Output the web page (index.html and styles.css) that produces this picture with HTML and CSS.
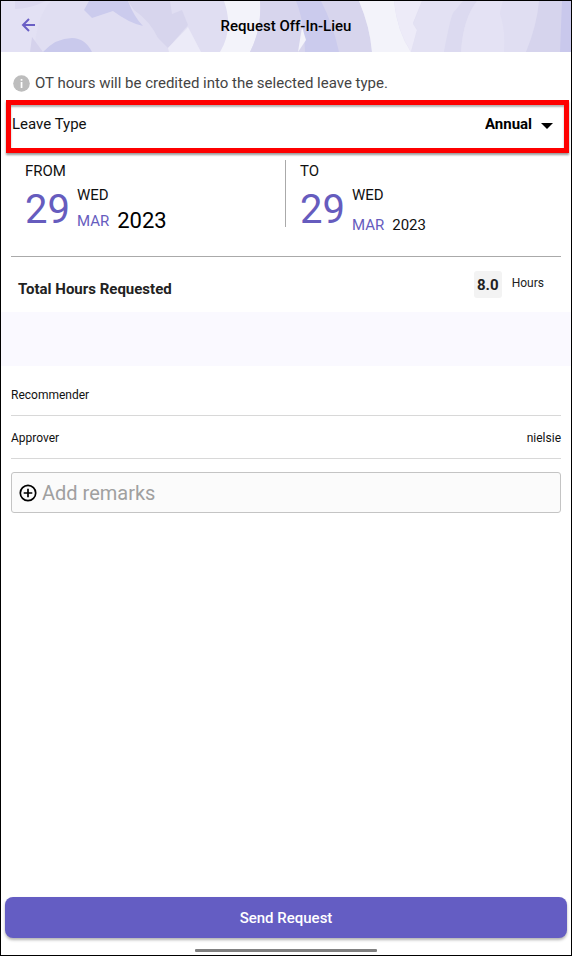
FILE: index.html
```
<!DOCTYPE html>
<html lang="en">

<head>
    <meta charset="UTF-8">
    <meta name="viewport" content="width=device-width, initial-scale=1.0">
    <title>Request Off-In-Lieu</title>
    <link rel="stylesheet" href="styles.css">
</head>

<body>
    <header class="header">
        <svg class="header-art" viewBox="0 0 570 51" preserveAspectRatio="none" aria-hidden="true">
            <rect width="570" height="51" fill="#e0def2" />
            <path d="M0 0H50Q36 14 33 51H0Z" fill="#e3e1f4" />
            <path d="M14 0H45Q28 8 14 8Z" fill="#dcd9f0" />
            <path d="M31 36L42 51H29Z" fill="#d5d2ec" />
            <path d="M42 51Q55 37 71 37Q84 37 91 51Z" fill="#c9c9ec" />
            <path d="M88 0H127Q133 16 142 25Q128 22 112 10L91 17L83 9Z" fill="#cbcbed" />
            <path d="M127 0H169L171 13L181 9L187 24L167 47L157 37Q149 20 133 9Z" fill="#d7d5ed" />
            <path d="M167 47L187 26L200 51H168Z" fill="#ecebf8" />
            <path d="M223 0H259Q261 27 249 51H219Q233 28 223 0Z" fill="#f3f3fa" />
            <path d="M259 0H358Q369 26 371 51H249Q261 27 259 0Z" fill="#d7d5ed" />
            <path d="M295 0H320Q332 23 338 51H304Q303 19 295 0Z" fill="#cbcbed" />
            <path d="M301 26L305 39L297 51Z" fill="#f3f3fa" />
            <path d="M358 0H393Q396 30 410 51H371Q369 26 358 0Z" fill="#f3f3fa" />
            <path d="M393 0H421L412 22L416 29L410 51Q396 30 393 0Z" fill="#edebf8" />
            <path d="M421 0H462Q449 18 443 51H410L416 29L412 23Z" fill="#e3e1f3" />
            <path d="M462 0H476Q462 18 460 51H443Q449 18 452 12Z" fill="#dcdaf0" />
            <path d="M476 0H502L499 12Q505 30 503 51H460Q462 18 476 0Z" fill="#e4e2f4" />
            <path d="M502 0H538Q536 24 525 51H503Q505 30 499 12Z" fill="#e0def2" />
            <path d="M538 0H561V51H525Q536 24 538 0Z" fill="#d6d4ed" />
            <path d="M561 0H570V51H559Z" fill="#c9c8ec" />
        </svg>
        <button class="back-button" aria-label="Back" onclick="goBack()">
            <svg width="14" height="14" viewBox="0 0 14 14" fill="none" stroke="#6a5fc5" stroke-width="2">
                <path d="M14 7H2M8 1L2 7L8 13" />
            </svg>
        </button>
        <h1>Request Off-In-Lieu</h1>
    </header>

    <main>
        <p class="info">
            <svg width="17" height="17" viewBox="0 0 17 17" aria-hidden="true">
                <circle cx="8.5" cy="8.5" r="8.3" fill="#bdbdbd" />
                <path d="M7.7 4h1.7v1.7H7.7zM7.7 7h1.7v6H7.7z" fill="#fff" />
            </svg>
            OT hours will be credited into the selected leave type.
        </p>

        <div class="leave-type">
            <label for="leaveType">Leave Type</label>
            <div class="leave-select">
                <select id="leaveType">
                    <option>Annual</option>
                </select>
                <svg width="12" height="6" viewBox="0 0 12 6" aria-hidden="true">
                    <path d="M0 0H12L6 6Z" fill="#000" />
                </svg>
            </div>
        </div>

        <section class="dates">
            <div class="date date-from">
                <h2>FROM</h2>
                <div class="date-value">
                    <span class="day">29</span>
                    <div>
                        <div class="weekday">WED</div>
                        <div class="month-year"><span class="month">MAR</span><span class="year">2023</span></div>
                    </div>
                </div>
            </div>
            <div class="date">
                <h2>TO</h2>
                <div class="date-value">
                    <span class="day">29</span>
                    <div>
                        <div class="weekday">WED</div>
                        <div class="month-year"><span class="month">MAR</span><span class="year">2023</span></div>
                    </div>
                </div>
            </div>
        </section>

        <section class="total">
            <h2>Total Hours Requested</h2>
            <div class="hours">
                <span class="hours-value">8.0</span>
                <span class="hours-unit">Hours</span>
            </div>
        </section>

        <div class="band"></div>

        <dl class="people">
            <div class="person">
                <dt>Recommender</dt>
                <dd></dd>
            </div>
            <div class="person">
                <dt>Approver</dt>
                <dd>nielsie</dd>
            </div>
        </dl>

        <div class="remarks">
            <svg width="18" height="18" viewBox="0 0 18 18" fill="none" stroke="#000" stroke-width="1.7" aria-hidden="true">
                <circle cx="9" cy="9" r="7.7" />
                <path d="M9 4.7V13.3M4.7 9H13.3" />
            </svg>
            <input type="text" placeholder="Add remarks" aria-label="Add remarks">
        </div>
    </main>

    <footer>
        <button class="send-button">Send Request</button>
        <div class="home-bar"></div>
    </footer>

    <script>
        function goBack() {
            window.history.back();
        }
    </script>
</body>

</html>
```
FILE: styles.css
```
* {
    box-sizing: border-box;
}

html {
    background-color: #fff;
}

body {
    font-family: Roboto, sans-serif;
    font-size: 15px;
    line-height: 20px;
    margin: 0 1px 1px 0;
    min-height: calc(100vh - 1px);
    border: 1px solid #000;
    color: #111;
    display: flex;
    flex-direction: column;
}

h1,
h2,
p,
dl,
dd {
    margin: 0;
}

svg {
    flex: none;
}

button,
input,
select {
    font-family: inherit;
}

/* header */

.header {
    position: relative;
    height: 51px;
    display: flex;
    align-items: center;
    justify-content: center;
    padding-bottom: 2px;
}

.header-art {
    position: absolute;
    top: 0;
    left: 0;
    width: 100%;
    height: 100%;
}

.header h1 {
    position: relative;
    font-size: 15px;
    font-weight: 500;
    color: #000;
}

.back-button {
    position: absolute;
    left: 10px;
    top: 7px;
    width: 34px;
    height: 34px;
    display: flex;
    align-items: center;
    justify-content: center;
    padding: 0;
    border: none;
    background-color: transparent;
    cursor: pointer;
}

main {
    flex: 1;
}

.info {
    display: flex;
    align-items: center;
    gap: 5px;
    padding: 21px 12px 7px;
    font-size: 15px;
    color: #444;
}

/* leave type */

.leave-type {
    display: flex;
    justify-content: space-between;
    align-items: center;
    margin: 0 2px 0 5px;
    height: 53px;
    padding: 0 11px 5px 1px;
    border: 5px solid #fe0000;
    box-shadow: 0 2px 2px rgba(0, 0, 0, 0.4), inset 0 2px 2px rgba(0, 0, 0, 0.3);
}

.leave-select {
    display: flex;
    align-items: center;
    gap: 8px;
}

.leave-select svg {
    margin-top: 4px;
}

.leave-select select {
    appearance: none;
    border: none;
    padding: 0;
    background-color: transparent;
    font-size: 15px;
    font-weight: 700;
    color: #000;
}

/* dates */

.dates {
    display: grid;
    grid-template-columns: 1fr 1fr;
    margin: 0 10px;
    padding: 7px 0 29px;
    border-bottom: 1px solid #aaa;
}

.date {
    height: 67px;
    padding-left: 14px;
}

.date-from {
    border-right: 1px solid #aaa;
}

.date h2 {
    font-size: 15px;
    font-weight: 400;
    line-height: 22px;
}

.date-value {
    display: flex;
    gap: 7px;
}

.day {
    font-size: 40px;
    line-height: 56px;
    color: #665cbe;
}

.weekday {
    margin-top: 3px;
}

.month-year {
    display: flex;
    align-items: center;
    gap: 8px;
    line-height: 40px;
}

.month {
    color: #665cbe;
}

.date-from .month-year {
    line-height: 32px;
}

.date-from .year {
    font-size: 22px;
    color: #000;
}

/* total */

.total {
    display: flex;
    justify-content: space-between;
    padding: 14px 27px 5px 17px;
    color: #222;
}

.total h2 {
    font-size: 15px;
    font-weight: 700;
    line-height: 36px;
}

.hours {
    display: flex;
    gap: 10px;
}

.hours-value {
    width: 28px;
    height: 27px;
    border-radius: 3px;
    background-color: #f3f3f3;
    font-weight: 700;
    line-height: 29px;
    text-align: center;
}

.hours-unit {
    font-size: 12px;
    line-height: 25px;
}

.band {
    height: 54px;
    background-color: #faf9ff;
}

/* people */

.people {
    padding: 7px 10px 0;
    font-size: 12px;
}

.person {
    display: flex;
    justify-content: space-between;
    height: 43px;
    line-height: 44px;
    border-bottom: 1px solid #d8d8d8;
}

.remarks {
    display: flex;
    align-items: center;
    gap: 5px;
    height: 41px;
    margin: 13px 10px;
    padding: 0 7px;
    border: 1px solid #c4c4c4;
    border-radius: 3px;
    background-color: #fbfbfb;
}

.remarks input {
    flex: 1;
    min-width: 0;
    padding: 0;
    border: none;
    background-color: transparent;
    font-size: 20px;
}

.remarks input::placeholder {
    color: #a0a0a0;
}

/* bottom */

footer {
    padding: 0 4px 3px;
}

.send-button {
    display: block;
    width: 100%;
    height: 41px;
    border: none;
    border-radius: 8px;
    background-color: #645dc3;
    box-shadow: 0 2px 3px rgba(0, 0, 0, 0.3);
    color: #fff;
    font-size: 15px;
    font-weight: 500;
    cursor: pointer;
}

.home-bar {
    width: 182px;
    height: 3px;
    margin: 11px auto 0;
    border-radius: 1px;
    background-color: #808080;
}
```
